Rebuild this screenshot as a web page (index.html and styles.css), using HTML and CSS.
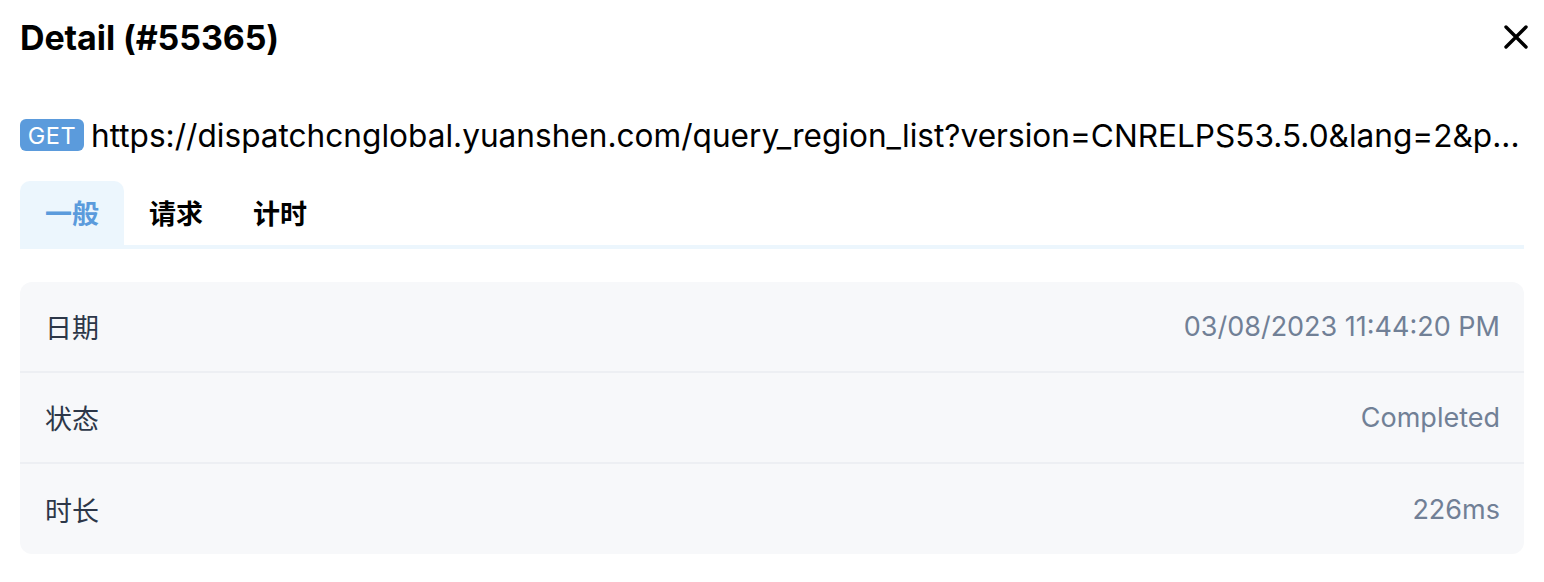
FILE: index.html
```html
<!DOCTYPE html>
<html lang="zh">
<head>
<meta charset="utf-8">
<title>Detail</title>
<link rel="stylesheet" href="styles.css">
</head>
<body>
<div class="panel">
  <header class="header">
    <h1 class="title">Detail (#55365)</h1>
    <button class="close" aria-label="close">
      <svg width="24" height="24" viewBox="0 0 24 24"><path d="M2 2 L22 22 M22 2 L2 22" stroke="#000" stroke-width="3.4" stroke-linecap="round" fill="none"/></svg>
    </button>
  </header>
  <div class="url-row">
    <span class="method">GET</span>
    <span class="url">https://dispatchcnglobal.yuanshen.com/query_region_list?version=CNRELPS53.5.0&amp;lang=2&amp;p...</span>
  </div>
  <nav class="tabs">
    <div class="tab active">一般</div>
    <div class="tab">请求</div>
    <div class="tab">计时</div>
  </nav>
  <div class="card">
    <div class="row"><span class="label">日期</span><span class="value">03/08/2023 11:44:20 PM</span></div>
    <div class="row"><span class="label">状态</span><span class="value">Completed</span></div>
    <div class="row last"><span class="label">时长</span><span class="value">226ms</span></div>
  </div>
</div>
</body>
</html>
```
FILE: styles.css
```css
* { box-sizing: border-box; }
html, body { margin: 0; background: #fff; }
body {
  font-family: Inter, "Noto Sans CJK SC", sans-serif;
  color: #000;
}
.panel {
  padding: 0 20px;
  width: 1544px;
}
.header {
  height: 74px;
  display: flex;
  align-items: center;
  justify-content: space-between;
}
.title {
  margin: 0;
  font-size: 34px;
  font-weight: 700;
  letter-spacing: -0.1px;
}
.close {
  border: 0;
  background: none;
  padding: 0;
  margin-right: -4px;
  width: 24px;
  height: 24px;
  display: flex;
}
.url-row {
  margin-top: 36px;
  height: 50px;
  display: flex;
  align-items: center;
  gap: 7px;
}
.method {
  flex: none;
  width: 64px;
  height: 32px;
  border-radius: 6px;
  background: #5b9bdc;
  color: #fff;
  font-size: 23.5px;
  display: flex;
  align-items: center;
  justify-content: center;
  letter-spacing: 0.6px;
}
.url {
  flex: 1;
  min-width: 0;
  white-space: nowrap;
  overflow: hidden;
  text-overflow: ellipsis;
  font-size: 31.6px;
}
.tabs {
  margin-top: 21px;
  display: flex;
  border-bottom: 4px solid #ecf6fd;
  height: 68px;
}
.tab {
  padding: 0 25px;
  height: 68px;
  margin-bottom: -4px;
  display: flex;
  align-items: center;
  font-size: 27px;
  font-weight: 700;
  border-radius: 10px 10px 0 0;
  padding-bottom: 6px;
}
.tab.active {
  background: #ecf6fd;
  color: #5b9bdc;
}
.card {
  margin-top: 33px;
  background: #f7f8fa;
  border-radius: 12px;
}
.row {
  height: 89px;
  display: flex;
  align-items: center;
  justify-content: space-between;
  padding: 0 24px 0 25px;
  font-size: 27px;
}
.row + .row {
  height: 91px;
  border-top: 2px solid #edeff3;
}
.row.last { height: 92px; }
.label { color: #2d3748; }
.value { color: #718096; }
```
